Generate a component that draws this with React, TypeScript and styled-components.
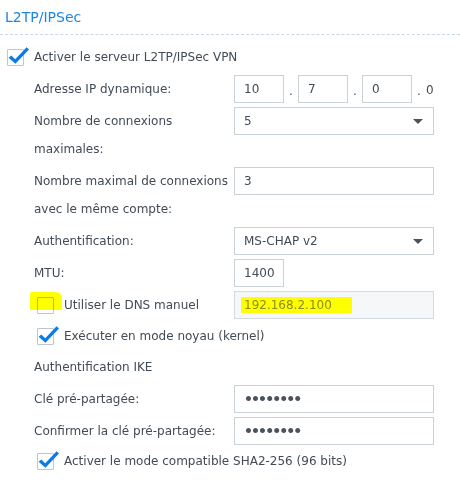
import React from "react";
import styled, { createGlobalStyle } from "styled-components";

const GlobalStyle = createGlobalStyle`
  html, body {
    margin: 0;
    padding: 0;
    background: #ffffff;
  }
  body {
    font-family: "DejaVu Sans", Verdana, sans-serif;
    font-size: 12px;
    color: #414b55;
  }
`;

const Panel = styled.div`
  width: 460px;
  height: 487px;
  overflow: hidden;
`;

const Header = styled.div`
  height: 35px;
  display: flex;
  align-items: center;
  padding-left: 5px;
  border-bottom: 1px dashed #cad8e4;
  box-sizing: border-box;
  color: #1a86e6;
  font-size: 14px;
`;

const Body = styled.div`
  display: flex;
  flex-direction: column;
  gap: 4px;
  padding-top: 8px;
`;

const CheckRow = styled.div<{ $indent: number; $height?: number }>`
  display: flex;
  align-items: center;
  gap: 10px;
  height: ${(p) => p.$height ?? 26}px;
  padding-left: ${(p) => p.$indent}px;
  white-space: nowrap;
`;

const FieldRow = styled.div`
  display: grid;
  grid-template-columns: 200px 200px;
  align-items: start;
  padding-left: 34px;
`;

const Label = styled.div`
  line-height: 28px;
  white-space: nowrap;
`;

const CheckLabel = styled.div`
  display: flex;
  align-items: center;
  gap: 10px;
  height: 28px;
  padding-left: 3px;
  white-space: nowrap;
`;

const SectionLabel = styled.div`
  height: 28px;
  line-height: 28px;
  padding-left: 34px;
`;

const Box = styled.span`
  position: relative;
  display: inline-block;
  width: 17px;
  height: 17px;
  box-sizing: border-box;
  border: 1px solid #bcc6cf;
  border-radius: 1px;
  background: #fff;
  flex: none;
`;

const Tick = styled.svg`
  position: absolute;
  left: -1px;
  top: -4px;
  width: 22px;
  height: 22px;
  overflow: visible;
`;

const Marker = styled.span`
  position: absolute;
  left: -8px;
  top: -6px;
  width: 32px;
  height: 18px;
  background: #ffff00;
  mix-blend-mode: multiply;
  border-radius: 2px 6px 2px 1px;
`;

const Input = styled.div<{ $width?: number; $disabled?: boolean }>`
  width: ${(p) => p.$width ?? 200}px;
  height: 28px;
  box-sizing: border-box;
  border: 1px solid ${(p) => (p.$disabled ? "#d3dae1" : "#c9d1d9")};
  background: ${(p) => (p.$disabled ? "#f5f7f9" : "#ffffff")};
  padding: 0 9px;
  display: flex;
  align-items: center;
  justify-content: space-between;
  color: #414b55;
`;

const Dots = styled.span`
  font-size: 14px;
  letter-spacing: -1.9px;
  color: #4a525a;
  font-weight: bold;
`;

const Arrow = styled.span`
  width: 0;
  height: 0;
  border-left: 5px solid transparent;
  border-right: 5px solid transparent;
  border-top: 5px solid #4a535c;
  margin-right: 1px;
`;

const IpGroup = styled.div`
  display: flex;
  align-items: center;
`;

const Sep = styled.span`
  width: 14px;
  text-align: center;
  padding-top: 4px;
`;

const Tail = styled.span`
  padding-top: 2px;
`;

const Highlight = styled.span`
  background: #ffff00;
  color: #8b8f1e;
  margin-left: -3px;
  padding: 1px 20px 1px 3px;
  line-height: 14px;
`;

const Check = ({ checked, marked }: { checked?: boolean; marked?: boolean }) => (
  <Box>
    {checked && (
      <Tick viewBox="0 0 22 22">
        <path d="M1.6 11.8 L4.3 9.4 L8.2 13.2 L19.6 1.2 L22 3.4 L8.4 17.8 Z" fill="#0b7be6" />
      </Tick>
    )}
    {marked && <Marker />}
  </Box>
);

const Select = ({ value }: { value: string }) => (
  <Input>
    <span>{value}</span>
    <Arrow />
  </Input>
);

export default function App() {
  return (
    <Panel>
      <GlobalStyle />
      <Header>L2TP/IPSec</Header>
      <Body>
        <CheckRow $indent={7} $height={28}>
          <Check checked />
          <span>Activer le serveur L2TP/IPSec VPN</span>
        </CheckRow>

        <FieldRow>
          <Label>Adresse IP dynamique:</Label>
          <IpGroup>
            <Input $width={50}>10</Input>
            <Sep>.</Sep>
            <Input $width={50}>7</Input>
            <Sep>.</Sep>
            <Input $width={50}>0</Input>
            <Sep>.</Sep>
            <Tail>0</Tail>
          </IpGroup>
        </FieldRow>

        <FieldRow>
          <Label>
            Nombre de connexions
            <br />
            maximales:
          </Label>
          <Select value="5" />
        </FieldRow>

        <FieldRow>
          <Label>
            Nombre maximal de connexions
            <br />
            avec le même compte:
          </Label>
          <Input>3</Input>
        </FieldRow>

        <FieldRow>
          <Label>Authentification:</Label>
          <Select value="MS-CHAP v2" />
        </FieldRow>

        <FieldRow>
          <Label>MTU:</Label>
          <Input $width={50}>1400</Input>
        </FieldRow>

        <FieldRow>
          <CheckLabel>
            <Check marked />
            <span>Utiliser le DNS manuel</span>
          </CheckLabel>
          <Input $disabled>
            <Highlight>192.168.2.100</Highlight>
          </Input>
        </FieldRow>

        <CheckRow $indent={37}>
          <Check checked />
          <span>Exécuter en mode noyau (kernel)</span>
        </CheckRow>

        <SectionLabel>Authentification IKE</SectionLabel>

        <FieldRow>
          <Label>Clé pré-partagée:</Label>
          <Input>
            <Dots>••••••••</Dots>
          </Input>
        </FieldRow>

        <FieldRow>
          <Label>Confirmer la clé pré-partagée:</Label>
          <Input>
            <Dots>••••••••</Dots>
          </Input>
        </FieldRow>

        <CheckRow $indent={37} $height={24}>
          <Check checked />
          <span>Activer le mode compatible SHA2-256 (96 bits)</span>
        </CheckRow>
      </Body>
    </Panel>
  );
}
